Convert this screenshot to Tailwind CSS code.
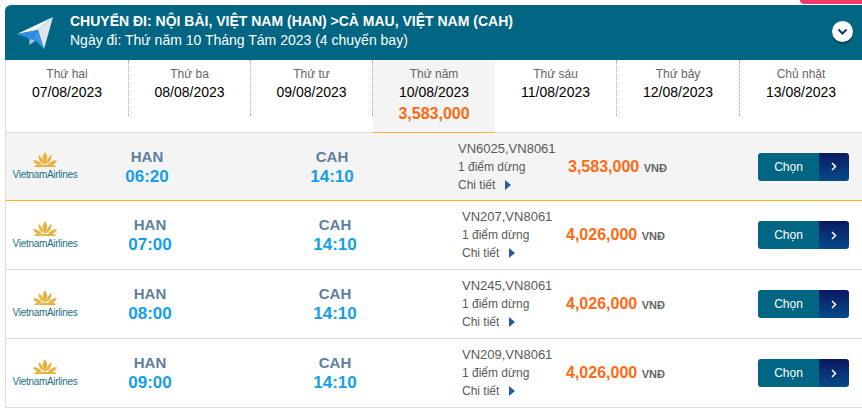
<!DOCTYPE html>
<html lang="en">
<head>
    <meta charset="UTF-8">
    <title>Chuyến đi</title>
    <script src="https://cdn.jsdelivr.net/npm/@tailwindcss/browser@4"></script>
</head>
<body class="bg-white font-['Liberation_Sans',Arial,sans-serif] w-[862px] h-[412px] overflow-hidden">

    <!-- top strip -->
    <div class="h-[5px] flex justify-end">
        <div class="w-[62px] h-[4px] bg-[#f2386c] rounded-bl-[4px]"></div>
    </div>

    <div class="ml-[5px] w-[857px] border-l border-[#dcdcdc]">
        <!-- Header -->
        <div class="-ml-px h-[55px] bg-[#006684] rounded-tl-[6px] flex items-center text-white relative">
            <svg class="w-[40px] h-[36px] ml-[11px] shrink-0" viewBox="16 14 40 36">
                <polygon points="53,16 17,33 38,29" fill="#f3f6f8"/>
                <polygon points="53,16 38,29 44,48" fill="#dfe5ea"/>
                <polygon points="17,33 38,29 30,41 28,37" fill="#2f8ce0"/>
                <polygon points="38,29 44,48 36,40 30,41" fill="#3a96e6"/>
                <polygon points="30,38 29,44 35,40" fill="#a8c8e0"/>
            </svg>
            <div class="ml-[14px] mt-[-3px] text-[14px] leading-[19px]">
                <div class="font-bold">CHUYẾN ĐI: NỘI BÀI, VIỆT NAM (HAN) &gt;CÀ MAU, VIỆT NAM (CAH)</div>
                <div>Ngày đi: Thứ năm 10 Tháng Tám 2023 (4 chuyến bay)</div>
            </div>
            <div class="ml-auto mr-[9px] mt-[-2px] w-[21px] h-[21px] rounded-full bg-white shadow-[0_2px_1px_rgba(0,0,0,0.35)] flex items-center justify-center">
                <svg class="w-[11px] h-[8px]" viewBox="0 0 11 8"><path d="M1.500 1.500 L5.500 5.500 L9.500 1.500" fill="none" stroke="#123a57" stroke-width="2"/></svg>
            </div>
        </div>

        <!-- Date tabs -->
        <div class="flex h-[73px] text-center border-b border-[#e0e0e0]">
            <div class="w-[123px] h-[56px] border-r border-dotted border-[#aaa] pt-[6px]">
                <div class="text-[12px] leading-[16px] text-[#666]">Thứ hai</div>
                <div class="text-[14px] leading-[20px] text-black">07/08/2023</div>
            </div>
            <div class="w-[122px] h-[56px] border-r border-dotted border-[#aaa] pt-[6px]">
                <div class="text-[12px] leading-[16px] text-[#666]">Thứ ba</div>
                <div class="text-[14px] leading-[20px] text-black">08/08/2023</div>
            </div>
            <div class="w-[122px] h-[56px] border-r border-dotted border-[#aaa] pt-[6px]">
                <div class="text-[12px] leading-[16px] text-[#666]">Thứ tư</div>
                <div class="text-[14px] leading-[20px] text-black">09/08/2023</div>
            </div>
            <div class="w-[122px] h-[73px] bg-[#f4f4f4] border-b border-[#f5b041] pt-[6px]">
                <div class="text-[12px] leading-[16px] text-[#666]">Thứ năm</div>
                <div class="text-[14px] leading-[20px] text-black">10/08/2023</div>
                <div class="text-[16px] leading-[24px] font-bold text-[#ff6a13]">3,583,000</div>
            </div>
            <div class="w-[122px] h-[56px] border-r border-dotted border-[#aaa] pt-[6px]">
                <div class="text-[12px] leading-[16px] text-[#666]">Thứ sáu</div>
                <div class="text-[14px] leading-[20px] text-black">11/08/2023</div>
            </div>
            <div class="w-[123px] h-[56px] border-r border-dotted border-[#aaa] pt-[6px]">
                <div class="text-[12px] leading-[16px] text-[#666]">Thứ bảy</div>
                <div class="text-[14px] leading-[20px] text-black">12/08/2023</div>
            </div>
            <div class="w-[122px] h-[56px] pt-[6px]">
                <div class="text-[12px] leading-[16px] text-[#666]">Chủ nhật</div>
                <div class="text-[14px] leading-[20px] text-black">13/08/2023</div>
            </div>
        </div>

        <!-- Row 1 -->
        <div class="flex items-center h-[68px] bg-[#f4f4f4] border-b border-[#fdb813]">
            <div class="w-[78px] flex flex-col items-center">
                <svg class="w-[26px] h-[15px]" viewBox="0 0 28 16"><path d="M14 0 C17 4 17 8 15 13 L13 13 C11 8 11 4 14 0Z M7 3 C10 5 12 9 12.500 13 C9 12 7 8 7 3Z M21 3 C18 5 16 9 15.500 13 C19 12 21 8 21 3Z M1 9 C4 8 8 10 11 14 C7 15 3 13 1 9Z M27 9 C24 8 20 10 17 14 C21 15 25 13 27 9Z M2 16 L26 16 L24 14 L4 14Z" fill="#e8b23e"/></svg>
                <div class="text-[10px] leading-[12px] mt-[2px] tracking-[-0.3px] text-[#22707f]">VietnamAirlines</div>
            </div>
            <div class="w-[124px] ml-[1px] text-center leading-[20px]">
                <div class="text-[15px] font-bold text-[#5f7f9f]">HAN</div>
                <div class="text-[17px] font-bold text-[#149fe8]">06:20</div>
            </div>
            <div class="w-[124px] ml-[61px] text-center leading-[20px]">
                <div class="text-[15px] font-bold text-[#5f7f9f]">CAH</div>
                <div class="text-[17px] font-bold text-[#149fe8]">14:10</div>
            </div>
            <div class="ml-[64px] w-[110px] text-[#5a5a5a] text-[12px] leading-[18px]">
                <div class="text-[13px]">VN6025,VN8061</div>
                <div>1 điểm dừng</div>
                <div class="flex items-center">Chi tiết<span class="ml-[10px] w-0 h-0 border-y-[5px] border-y-transparent border-l-[6px] border-l-[#2a5b9c]"></span></div>
            </div>
            <div class="w-[190px] whitespace-nowrap"><span class="text-[16px] font-bold text-[#ff6a13]">3,583,000</span> <span class="text-[11px] font-bold text-[#666]">VNĐ</span></div>
            <div class="flex w-[91px] h-[28px] rounded-[3px] overflow-hidden text-white text-[12px]">
                <div class="w-[61px] bg-[#006684] flex items-center justify-center">Chọn</div>
                <div class="w-[30px] bg-linear-to-b from-[#0a1860] to-[#074a8c] flex items-center justify-center">
                    <svg class="w-[6px] h-[9px]" viewBox="0 0 6 9"><path d="M1 1 L4.500 4.500 L1 8" fill="none" stroke="#fff" stroke-width="1.500"/></svg>
                </div>
            </div>
        </div>

        <!-- Row 2 -->
        <div class="flex items-center h-[69px] border-b border-[#dcdcdc]">
            <div class="w-[78px] flex flex-col items-center">
                <svg class="w-[26px] h-[15px]" viewBox="0 0 28 16"><path d="M14 0 C17 4 17 8 15 13 L13 13 C11 8 11 4 14 0Z M7 3 C10 5 12 9 12.500 13 C9 12 7 8 7 3Z M21 3 C18 5 16 9 15.500 13 C19 12 21 8 21 3Z M1 9 C4 8 8 10 11 14 C7 15 3 13 1 9Z M27 9 C24 8 20 10 17 14 C21 15 25 13 27 9Z M2 16 L26 16 L24 14 L4 14Z" fill="#e8b23e"/></svg>
                <div class="text-[10px] leading-[12px] mt-[2px] tracking-[-0.3px] text-[#22707f]">VietnamAirlines</div>
            </div>
            <div class="w-[124px] ml-[4px] text-center leading-[20px]">
                <div class="text-[15px] font-bold text-[#5f7f9f]">HAN</div>
                <div class="text-[17px] font-bold text-[#149fe8]">07:00</div>
            </div>
            <div class="w-[124px] ml-[61px] text-center leading-[20px]">
                <div class="text-[15px] font-bold text-[#5f7f9f]">CAH</div>
                <div class="text-[17px] font-bold text-[#149fe8]">14:10</div>
            </div>
            <div class="ml-[65px] w-[104px] text-[#5a5a5a] text-[12px] leading-[18px]">
                <div class="text-[13px]">VN207,VN8061</div>
                <div>1 điểm dừng</div>
                <div class="flex items-center">Chi tiết<span class="ml-[10px] w-0 h-0 border-y-[5px] border-y-transparent border-l-[6px] border-l-[#2a5b9c]"></span></div>
            </div>
            <div class="w-[192px] whitespace-nowrap"><span class="text-[16px] font-bold text-[#ff6a13]">4,026,000</span> <span class="text-[11px] font-bold text-[#666]">VNĐ</span></div>
            <div class="flex w-[91px] h-[28px] rounded-[3px] overflow-hidden text-white text-[12px]">
                <div class="w-[61px] bg-[#006684] flex items-center justify-center">Chọn</div>
                <div class="w-[30px] bg-linear-to-b from-[#0a1860] to-[#074a8c] flex items-center justify-center">
                    <svg class="w-[6px] h-[9px]" viewBox="0 0 6 9"><path d="M1 1 L4.500 4.500 L1 8" fill="none" stroke="#fff" stroke-width="1.500"/></svg>
                </div>
            </div>
        </div>

        <!-- Row 3 -->
        <div class="flex items-center h-[69px] border-b border-[#dcdcdc]">
            <div class="w-[78px] flex flex-col items-center">
                <svg class="w-[26px] h-[15px]" viewBox="0 0 28 16"><path d="M14 0 C17 4 17 8 15 13 L13 13 C11 8 11 4 14 0Z M7 3 C10 5 12 9 12.500 13 C9 12 7 8 7 3Z M21 3 C18 5 16 9 15.500 13 C19 12 21 8 21 3Z M1 9 C4 8 8 10 11 14 C7 15 3 13 1 9Z M27 9 C24 8 20 10 17 14 C21 15 25 13 27 9Z M2 16 L26 16 L24 14 L4 14Z" fill="#e8b23e"/></svg>
                <div class="text-[10px] leading-[12px] mt-[2px] tracking-[-0.3px] text-[#22707f]">VietnamAirlines</div>
            </div>
            <div class="w-[124px] ml-[4px] text-center leading-[20px]">
                <div class="text-[15px] font-bold text-[#5f7f9f]">HAN</div>
                <div class="text-[17px] font-bold text-[#149fe8]">08:00</div>
            </div>
            <div class="w-[124px] ml-[61px] text-center leading-[20px]">
                <div class="text-[15px] font-bold text-[#5f7f9f]">CAH</div>
                <div class="text-[17px] font-bold text-[#149fe8]">14:10</div>
            </div>
            <div class="ml-[65px] w-[104px] text-[#5a5a5a] text-[12px] leading-[18px]">
                <div class="text-[13px]">VN245,VN8061</div>
                <div>1 điểm dừng</div>
                <div class="flex items-center">Chi tiết<span class="ml-[10px] w-0 h-0 border-y-[5px] border-y-transparent border-l-[6px] border-l-[#2a5b9c]"></span></div>
            </div>
            <div class="w-[192px] whitespace-nowrap"><span class="text-[16px] font-bold text-[#ff6a13]">4,026,000</span> <span class="text-[11px] font-bold text-[#666]">VNĐ</span></div>
            <div class="flex w-[91px] h-[28px] rounded-[3px] overflow-hidden text-white text-[12px]">
                <div class="w-[61px] bg-[#006684] flex items-center justify-center">Chọn</div>
                <div class="w-[30px] bg-linear-to-b from-[#0a1860] to-[#074a8c] flex items-center justify-center">
                    <svg class="w-[6px] h-[9px]" viewBox="0 0 6 9"><path d="M1 1 L4.500 4.500 L1 8" fill="none" stroke="#fff" stroke-width="1.500"/></svg>
                </div>
            </div>
        </div>

        <!-- Row 4 -->
        <div class="flex items-center h-[69px] border-b border-[#dcdcdc]">
            <div class="w-[78px] flex flex-col items-center">
                <svg class="w-[26px] h-[15px]" viewBox="0 0 28 16"><path d="M14 0 C17 4 17 8 15 13 L13 13 C11 8 11 4 14 0Z M7 3 C10 5 12 9 12.500 13 C9 12 7 8 7 3Z M21 3 C18 5 16 9 15.500 13 C19 12 21 8 21 3Z M1 9 C4 8 8 10 11 14 C7 15 3 13 1 9Z M27 9 C24 8 20 10 17 14 C21 15 25 13 27 9Z M2 16 L26 16 L24 14 L4 14Z" fill="#e8b23e"/></svg>
                <div class="text-[10px] leading-[12px] mt-[2px] tracking-[-0.3px] text-[#22707f]">VietnamAirlines</div>
            </div>
            <div class="w-[124px] ml-[4px] text-center leading-[20px]">
                <div class="text-[15px] font-bold text-[#5f7f9f]">HAN</div>
                <div class="text-[17px] font-bold text-[#149fe8]">09:00</div>
            </div>
            <div class="w-[124px] ml-[61px] text-center leading-[20px]">
                <div class="text-[15px] font-bold text-[#5f7f9f]">CAH</div>
                <div class="text-[17px] font-bold text-[#149fe8]">14:10</div>
            </div>
            <div class="ml-[65px] w-[104px] text-[#5a5a5a] text-[12px] leading-[18px]">
                <div class="text-[13px]">VN209,VN8061</div>
                <div>1 điểm dừng</div>
                <div class="flex items-center">Chi tiết<span class="ml-[10px] w-0 h-0 border-y-[5px] border-y-transparent border-l-[6px] border-l-[#2a5b9c]"></span></div>
            </div>
            <div class="w-[192px] whitespace-nowrap"><span class="text-[16px] font-bold text-[#ff6a13]">4,026,000</span> <span class="text-[11px] font-bold text-[#666]">VNĐ</span></div>
            <div class="flex w-[91px] h-[28px] rounded-[3px] overflow-hidden text-white text-[12px]">
                <div class="w-[61px] bg-[#006684] flex items-center justify-center">Chọn</div>
                <div class="w-[30px] bg-linear-to-b from-[#0a1860] to-[#074a8c] flex items-center justify-center">
                    <svg class="w-[6px] h-[9px]" viewBox="0 0 6 9"><path d="M1 1 L4.500 4.500 L1 8" fill="none" stroke="#fff" stroke-width="1.500"/></svg>
                </div>
            </div>
        </div>
    </div>

</body>
</html>
